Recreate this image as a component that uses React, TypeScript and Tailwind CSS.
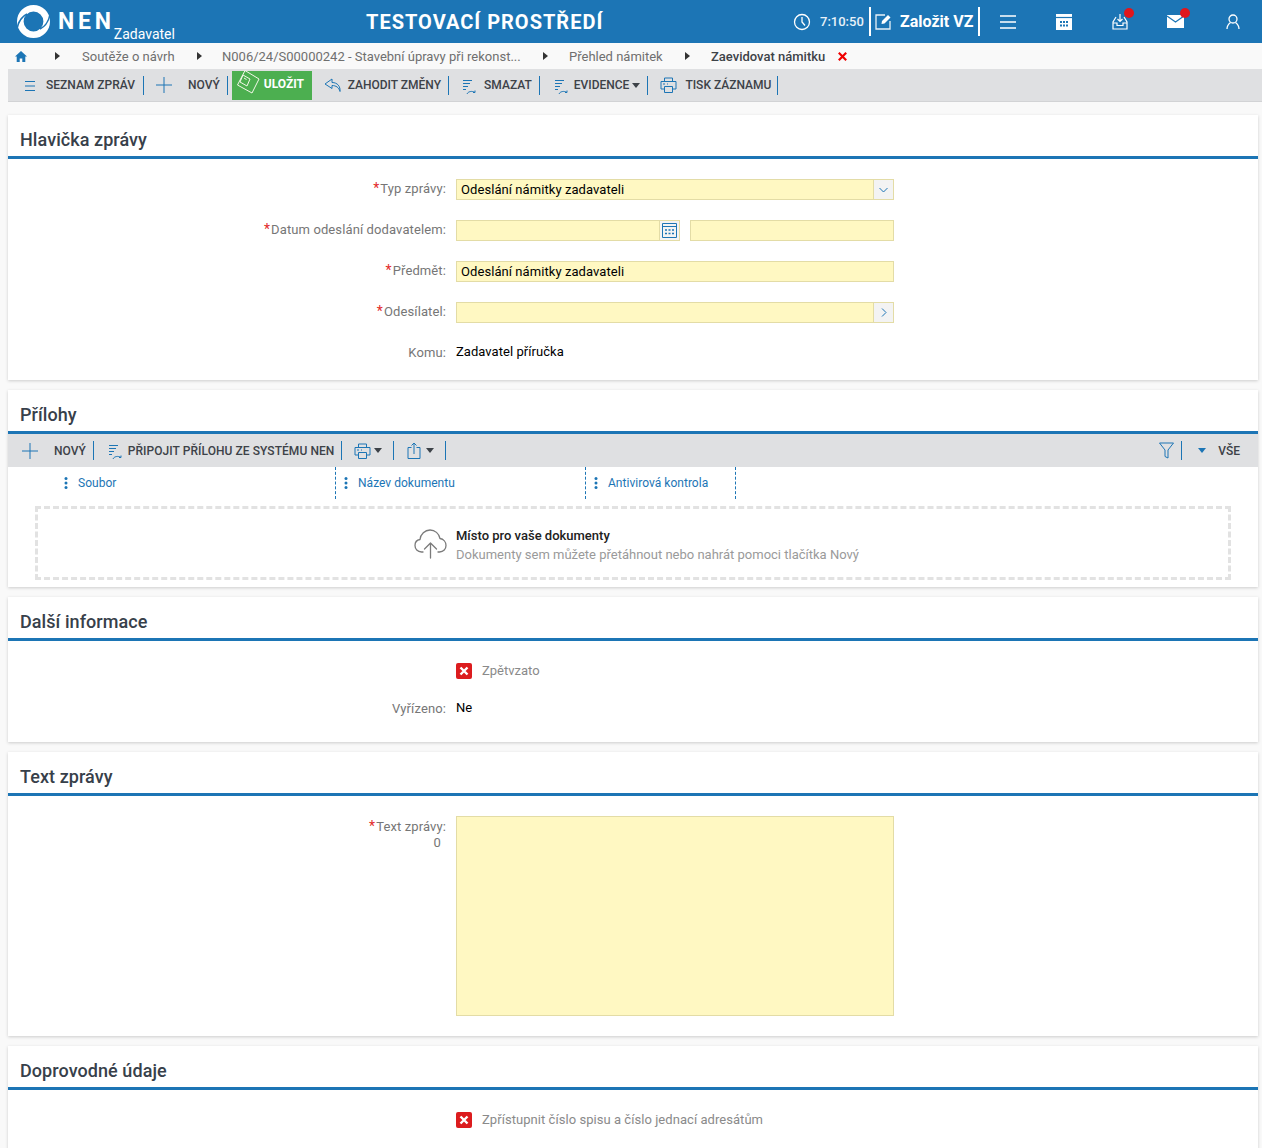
import React from "react";

const B = "#1c75b5";

function Sep() {
  return <span className="block w-px h-[19px] bg-[#1c75b5] shrink-0" />;
}

function Caret({ className = "" }: { className?: string }) {
  return <span className={"inline-block w-0 h-0 border-l-[4px] border-r-[4px] border-t-[5px] border-l-transparent border-r-transparent border-t-[#3d4248] " + className} />;
}

function ListIcon() {
  return (
    <svg width="12" height="12" viewBox="0 0 12 12" fill="none" stroke={B} strokeWidth="1">
      <path d="M1 1.500h10M1 6h10M1 10.500h10" />
    </svg>
  );
}
function PlusIcon() {
  return (
    <svg width="16" height="16" viewBox="0 0 16 16" fill="none" stroke={B} strokeWidth="1">
      <path d="M0 8h16M8 0v16" />
    </svg>
  );
}
function SaveIcon() {
  return (
    <svg width="23" height="24" viewBox="0 0 23 24" fill="none" stroke="#f3f7e8" strokeWidth="1">
      <path d="M8 .5L22 9l-7 14-14.500-8z" />
      <path d="M6 5l7 4-3 7-7-4z" />
      <path d="M7 8l2.500 1.500" />
    </svg>
  );
}
function UndoIcon() {
  return (
    <svg width="18" height="16" viewBox="0 0 18 16" fill="none" stroke={B} strokeWidth="1" strokeLinejoin="round">
      <path d="M8 2L1 7l7 4.500V8.500c4 0 7 2 8 6 .6-5-2.500-9-8-9z" />
    </svg>
  );
}
function SortIcon() {
  return (
    <svg width="15" height="16" viewBox="0 0 15 16" fill="none" stroke={B} strokeWidth="1">
      <path d="M1 1.500h9M1 4.500h7M1 7.500h5M1 10.500h3" />
      <path d="M5 15c1-2.500 5-3.500 8-1.500M13 11.500v2h-2" />
    </svg>
  );
}
function PrintIcon() {
  return (
    <svg width="17" height="16" viewBox="0 0 17 16" fill="none" stroke={B} strokeWidth="1">
      <path d="M4.500 4V1h8v3M4.500 12H1V4.500h15V12h-3.500" />
      <path d="M4.500 9.500h8v6h-8z" />
      <path d="M3 7h2M7 7h1" />
    </svg>
  );
}
function ShareIcon() {
  return (
    <svg width="14" height="17" viewBox="0 0 14 17" fill="none" stroke={B} strokeWidth="1">
      <path d="M4.500 5.500H1v11h12v-11H9.500" />
      <path d="M7 12V1M4.500 3.500L7 1l2.500 2.500" />
    </svg>
  );
}
function FilterIcon() {
  return (
    <svg width="15" height="17" viewBox="0 0 15 17" fill="none" stroke={B} strokeWidth="1" strokeLinejoin="round">
      <path d="M.5 1h14L9 8v8l-3-1.500V8z" />
    </svg>
  );
}
function Logo() {
  return (
    <svg width="33" height="33" viewBox="0 0 33 33">
      <circle cx="16.500" cy="16.500" r="13.200" fill="none" stroke="#fff" strokeWidth="6.600" />
      <path d="M0 24C1 18 4 12 10 9" fill="none" stroke="#1c75b5" strokeWidth="1.400" />
      <path d="M33 9C32 15 29 21 23 24" fill="none" stroke="#1c75b5" strokeWidth="1.400" />
    </svg>
  );
}

function TB({ icon, label, caret, cls = "" }: { icon: React.ReactNode; label: string; caret?: boolean; cls?: string }) {
  return (
    <span className={"flex items-center text-[12px] font-medium text-[#3d4248] whitespace-nowrap " + cls}>
      {icon}
      {label}
      {caret && <Caret className="ml-[3px]" />}
    </span>
  );
}

function Title({ children }: { children: string }) {
  return (
    <div className="h-[44px] pl-[12px] pt-[13px] border-b-[3px] border-[#1c75b5] text-[18px] leading-[24px] font-medium tracking-[0.07px] text-[#37404a]">
      {children}
    </div>
  );
}

function Section({ className = "", children }: { className?: string; children: React.ReactNode }) {
  return <section className={"bg-white shadow-[0_1px_3px_rgba(0,0,0,0.18)] " + className}>{children}</section>;
}

function Label({ text, req }: { text: string; req?: boolean }) {
  return (
    <div className={"w-[448px] shrink-0 pr-[10px] text-right text-[13px] text-[#767676] tracking-[0.11px] whitespace-nowrap " + (req ? "mt-[-2px]" : "")}>
      {req && <span className="text-[#e22a2a] text-[14px] mr-[1px]">*</span>}
      {text}:
    </div>
  );
}

const field = "h-[21px] bg-[#fff8c2] border border-[#e3dca6] text-[13px] tracking-[0.07px] text-black leading-[19px] pl-[4px]";

function RedX() {
  return (
    <span className="w-[16px] h-[16px] rounded-[2px] bg-[#dc1c1e] flex items-center justify-center shrink-0">
      <svg width="10" height="10" viewBox="0 0 10 10" stroke="#fff" strokeWidth="2.400">
        <path d="M1.500 1.500l7 7M8.500 1.500l-7 7" />
      </svg>
    </span>
  );
}

function Col({ w, label, pl }: { w: string; label: string; pl: string }) {
  return (
    <div className={"h-full flex items-center shrink-0 border-r border-dashed border-[#1c75b5] text-[12px] tracking-[0.03px] text-[#1c75b5] " + w + " " + pl}>
      <svg width="4" height="14" viewBox="0 0 4 14" fill="#1c75b5" className="mr-[10px]">
        <circle cx="2" cy="2.500" r="1.500" />
        <circle cx="2" cy="7" r="1.500" />
        <circle cx="2" cy="11.500" r="1.500" />
      </svg>
      {label}
    </div>
  );
}

function Crumb({ children }: { children: string }) {
  return (
    <span className="flex items-center mt-[2px] text-[13px] text-[#6f6f6f] whitespace-nowrap">{children}</span>
  );
}
function Tri() {
  return <span className="block w-0 h-0 border-t-[4px] border-b-[4px] border-l-[5px] border-t-transparent border-b-transparent border-l-[#333]" />;
}

export default function App() {
  return (
    <div className="w-[1262px] h-[1148px] overflow-hidden bg-[#f9f9f9] font-['Roboto',sans-serif]">
      {/* header */}
      <header className="h-[43px] bg-[#1c75b5] flex items-center text-white relative">
        <div className="ml-[17px] flex items-center w-[349px] shrink-0">
          <Logo />
          <span className="ml-[8px] text-[23px] font-bold tracking-[3.800px] leading-none">NEN</span>
          <span className="ml-[-1px] mt-[24px] text-[14px] leading-none">Zadavatel</span>
        </div>
        <span className="text-[20px] font-bold tracking-[1px] w-[425px] shrink-0 whitespace-nowrap">TESTOVACÍ PROSTŘEDÍ</span>
        <svg width="18" height="18" viewBox="0 0 18 18" fill="none" stroke="#fff" strokeWidth="1.300" className="ml-[2px]">
          <circle cx="9" cy="9" r="7.500" />
          <path d="M9 4v5l3 3.500" />
        </svg>
        <span className="ml-[9px] w-[42px] text-[13px] font-medium text-[#e8f1f8]">7:10:50</span>
        <span className="ml-[7px] w-[2px] h-[29px] bg-white" />
        <svg width="17" height="17" viewBox="0 0 17 17" fill="none" stroke="#e8f1f8" strokeWidth="1.300" className="ml-[4px]">
          <path d="M10 2H1v14h14V8" />
          <path d="M6.500 11l.5-3 6-6 2.500 2.500-6 6z" fill="#fff" stroke="none" />
        </svg>
        <span className="ml-[8px] w-[74px] text-[16px] font-bold whitespace-nowrap">Založit VZ</span>
        <span className="ml-[4px] w-[2px] h-[29px] bg-white" />
        <svg width="16" height="16" viewBox="0 0 17 16" stroke="#fff" strokeWidth="1.600" className="ml-[20px]">
          <path d="M0 1.500h17M0 8h17M0 14.500h17" />
        </svg>
        <svg width="16" height="16" viewBox="0 0 16 16" className="ml-[40px]">
          <path d="M0 0h16v16H0z" fill="#fff" />
          <path d="M0 3.500h16" stroke="#1c75b5" strokeWidth="1.200" />
          <path d="M4 7h2v2H4zM7 7h2v2H7zM10 7h2v2h-2zM4 10.500h2v2H4zM7 10.500h2v2H7zM10 10.500h2v2h-2z" fill="#1c75b5" />
        </svg>
        <span className="relative ml-[40px] w-[16px] h-[16px]">
          <svg width="16" height="16" viewBox="0 0 16 16" fill="none" stroke="#fff" strokeWidth="1.200">
            <path d="M4 3L1 8v7h14V8l-3-5" />
            <path d="M1 9h4v2.500h6V9h4" />
            <path d="M8 0v7M5.500 5L8 7.500 10.500 5" />
          </svg>
          <span className="absolute right-[-6px] top-[-6px] w-[10px] h-[10px] rounded-full bg-[#e0161c]" />
        </span>
        <span className="relative ml-[39px] w-[17px] h-[13px]">
          <svg width="17" height="13" viewBox="0 0 17 13">
            <path d="M0 0h17v13H0z" fill="#fff" />
            <path d="M0 1l8.500 6L17 1" fill="none" stroke="#1c75b5" strokeWidth="1.200" />
          </svg>
          <span className="absolute right-[-6px] top-[-7px] w-[10px] h-[10px] rounded-full bg-[#e0161c]" />
        </span>
        <svg width="14" height="15" viewBox="0 0 14 15" fill="none" stroke="#fff" strokeWidth="1.300" className="ml-[42px]">
          <circle cx="7" cy="5" r="4" />
          <path d="M1 15c0-3 1.500-5 3.500-6.500M13 15c0-3-1.500-5-3.500-6.500" />
        </svg>
      </header>

      {/* breadcrumb */}
      <nav className="h-[26px] flex items-center pl-[15px]">
        <svg width="12" height="11" viewBox="0 0 12 11" fill="#1c75b5">
          <path d="M6 0L0 5.500h1.700V11h3V7.500h2.600V11h3V5.500H12z" />
        </svg>
        <span className="ml-[28px]"><Tri /></span>
        <span className="ml-[22px] w-[93px]"><Crumb>Soutěže o návrh</Crumb></span>
        <span className="ml-[22px]"><Tri /></span>
        <span className="ml-[20px] w-[299px]"><Crumb>N006/24/S00000242 - Stavební úpravy při rekonst...</Crumb></span>
        <span className="ml-[22px]"><Tri /></span>
        <span className="ml-[21px] w-[94px]"><Crumb>Přehled námitek</Crumb></span>
        <span className="ml-[22px]"><Tri /></span>
        <span className="ml-[21px] w-[115px] mt-[2px] text-[13px] font-medium text-[#3d4248] whitespace-nowrap">Zaevidovat námitku</span>
        <svg width="9" height="9" viewBox="0 0 9 9" stroke="#f00000" strokeWidth="2.200" className="ml-[12px]">
          <path d="M.8.8l7.400 7.400M8.200.8L.8 8.200" />
        </svg>
      </nav>

      {/* toolbar */}
      <div className="ml-[8px] h-[33px] bg-[#dfe0e2] border-b border-[#d2d3d5] flex items-center">
        <span className="ml-[16px]"><TB icon={<span className="mr-[10px] mt-[2px] flex"><ListIcon /></span>} label="SEZNAM ZPRÁV" /></span>
        <span className="ml-[8px]"><Sep /></span>
        <span className="ml-[12px]"><TB icon={<span className="mr-[16px] flex"><PlusIcon /></span>} label="NOVÝ" /></span>
        <span className="ml-[7px]"><Sep /></span>
        <span className="ml-[4px] h-[29px] w-[80px] mt-[1px] bg-[#4caf50] flex items-start text-white text-[12px] font-bold shrink-0">
          <span className="ml-[5px] mt-[-1px] flex"><SaveIcon /></span>
          <span className="ml-[4px] mt-[4px]">ULOŽIT</span>
        </span>
        <span className="ml-[12px]"><TB icon={<span className="mr-[6px] flex"><UndoIcon /></span>} label="ZAHODIT ZMĚNY" /></span>
        <span className="ml-[7px]"><Sep /></span>
        <span className="ml-[13px]"><TB icon={<span className="mr-[7px] mt-[3px] flex"><SortIcon /></span>} label="SMAZAT" /></span>
        <span className="ml-[7px]"><Sep /></span>
        <span className="ml-[14px]"><TB icon={<span className="mr-[5px] mt-[3px] flex"><SortIcon /></span>} label="EVIDENCE" caret /></span>
        <span className="ml-[7px]"><Sep /></span>
        <span className="ml-[12px]"><TB icon={<span className="mr-[8px] flex"><PrintIcon /></span>} label="TISK ZÁZNAMU" /></span>
        <span className="ml-[6px]"><Sep /></span>
      </div>

      <main className="pl-[8px] pr-[4px] pt-[13px] flex flex-col gap-[10px]">
        {/* Hlavička */}
        <Section className="h-[265px]">
          <Title>Hlavička zprávy</Title>
          <div className="pt-[20px] flex flex-col gap-[20px]">
            <div className="flex items-center h-[21px]">
              <Label text="Typ zprávy" req />
              <div className={"w-[438px] flex justify-between " + field + " !pr-0"}>
                <span>Odeslání námitky zadavateli</span>
                <span className="w-[20px] h-full bg-[#f3f3f3] border-l border-[#e3dca6] flex items-center justify-center">
                  <svg width="9" height="6" viewBox="0 0 9 6" fill="none" stroke="#1c75b5"><path d="M.5 1l4 4 4-4" /></svg>
                </span>
              </div>
            </div>
            <div className="flex items-center h-[21px]">
              <Label text="Datum odeslání dodavatelem" req />
              <div className={"w-[224px] flex justify-end " + field + " !pr-0"}>
                <span className="w-[20px] h-full bg-[#f3f3f3] border-l border-[#e3dca6] flex items-center justify-center">
                  <svg width="15" height="15" viewBox="0 0 15 15" fill="none" stroke="#1c75b5">
                    <path d="M.5.5h14v14H.5z" />
                    <path d="M.5 3.500h14" />
                    <path d="M3 7h2M6.500 7h2M10 7h2M3 10.500h2M6.500 10.500h2M10 10.500h2" strokeWidth="1.500" />
                  </svg>
                </span>
              </div>
              <div className={"ml-[10px] w-[204px] " + field} />
            </div>
            <div className="flex items-center h-[21px]">
              <Label text="Předmět" req />
              <div className={"w-[438px] " + field}>Odeslání námitky zadavateli</div>
            </div>
            <div className="flex items-center h-[21px]">
              <Label text="Odesílatel" req />
              <div className={"w-[438px] flex justify-end " + field + " !pr-0"}>
                <span className="w-[20px] h-full bg-[#f3f3f3] border-l border-[#e3dca6] flex items-center justify-center">
                  <svg width="6" height="9" viewBox="0 0 6 9" fill="none" stroke="#1c75b5"><path d="M1 .5l4 4-4 4" /></svg>
                </span>
              </div>
            </div>
            <div className="flex items-center h-[19px]">
              <Label text="Komu" />
              <div className="text-[13px] tracking-[0.05px] text-black mt-[-2px]">Zadavatel příručka</div>
            </div>
          </div>
        </Section>

        {/* Přílohy */}
        <Section className="h-[197px]">
          <Title>Přílohy</Title>
          <div className="h-[33px] bg-[#dfe0e2] flex items-center">
            <span className="ml-[14px]"><TB icon={<span className="mr-[16px] flex"><PlusIcon /></span>} label="NOVÝ" /></span>
            <span className="ml-[7px]"><Sep /></span>
            <span className="ml-[14px]"><TB cls="tracking-[0.06px]" icon={<span className="mr-[5px] mt-[3px] flex"><SortIcon /></span>} label="PŘIPOJIT PŘÍLOHU ZE SYSTÉMU NEN" /></span>
            <span className="ml-[7px]"><Sep /></span>
            <span className="ml-[12px] flex items-center"><PrintIcon /><Caret className="ml-[3px]" /></span>
            <span className="ml-[11px]"><Sep /></span>
            <span className="ml-[13px] flex items-center"><ShareIcon /><Caret className="ml-[5px]" /></span>
            <span className="ml-[11px]"><Sep /></span>
            <span className="ml-auto flex items-center"><FilterIcon /></span>
            <span className="ml-[7px]"><Sep /></span>
            <span className="ml-[16px] block w-0 h-0 border-l-[4px] border-r-[4px] border-t-[5px] border-l-transparent border-r-transparent border-t-[#1c75b5]" />
            <span className="ml-[12px] mr-[18px] text-[12px] font-medium text-[#3d4248]">VŠE</span>
          </div>
          <div className="h-[32px] flex">
            <Col w="w-[328px]" pl="pl-[56px]" label="Soubor" />
            <Col w="w-[250px]" pl="pl-[8px]" label="Název dokumentu" />
            <Col w="w-[150px]" pl="pl-[8px]" label="Antivirová kontrola" />
          </div>
          <div className="mx-[27px] mt-[7px] h-[74px] pt-[3px] border-[3px] border-dashed border-[#e2e2e2] flex items-center pl-[376px]">
            <svg width="33" height="31" viewBox="0 0 33 31" fill="none" stroke="#7b7b7b" strokeWidth="1.300" strokeLinecap="round" strokeLinejoin="round" className="shrink-0 mt-[-3px]">
              <path d="M9 24H7.500C3.500 24 1 21 1 17.500 1 14.500 3 12 6 11.500 6.500 6 11 2 16 2c5 0 9 3.500 10 8.500 3.500.5 6 3.500 6 7 0 3.500-2.500 6.500-6.500 6.500H24" />
              <path d="M16.500 30V15M10.500 21l6-6 6 6" />
            </svg>
            <div className="ml-[9px] whitespace-nowrap">
              <div className="text-[13px] font-medium text-[#212121] leading-[19px]">Místo pro vaše dokumenty</div>
              <div className="text-[13px] text-[#9a9a9a] leading-[19px]">Dokumenty sem můžete přetáhnout nebo nahrát pomoci tlačítka Nový</div>
            </div>
          </div>
        </Section>

        {/* Další informace */}
        <Section className="h-[145px]">
          <Title>Další informace</Title>
          <div className="pl-[448px] pt-[20px] flex items-center gap-[10px] text-[13px] text-[#8a8a8a]">
            <RedX />
            <span>Zpětvzato</span>
          </div>
          <div className="flex items-center h-[19px] mt-[19px]">
            <Label text="Vyřízeno" />
            <div className="text-[13px] text-black mt-[-2px]">Ne</div>
          </div>
        </Section>

        {/* Text zprávy */}
        <Section className="h-[284px]">
          <Title>Text zprávy</Title>
          <div className="flex pt-[20px]">
            <div className="w-[448px] shrink-0 pr-[10px] text-right text-[13px] leading-[16px] text-[#767676] tracking-[0.11px] pt-[2px]">
              <div><span className="text-[#e22a2a] text-[14px] mr-[1px]">*</span>Text zprávy:</div>
              <div className="pr-[5px]">0</div>
            </div>
            <div className="w-[438px] h-[200px] bg-[#fff8c2] border border-[#e3dca6]" />
          </div>
        </Section>

        {/* Doprovodné údaje */}
        <Section className="h-[110px]">
          <Title>Doprovodné údaje</Title>
          <div className="pl-[448px] pt-[20px] flex items-center gap-[10px] text-[13px] tracking-[0.05px] text-[#8a8a8a]">
            <RedX />
            <span>Zpřístupnit číslo spisu a číslo jednací adresátům</span>
          </div>
        </Section>
      </main>
    </div>
  );
}
